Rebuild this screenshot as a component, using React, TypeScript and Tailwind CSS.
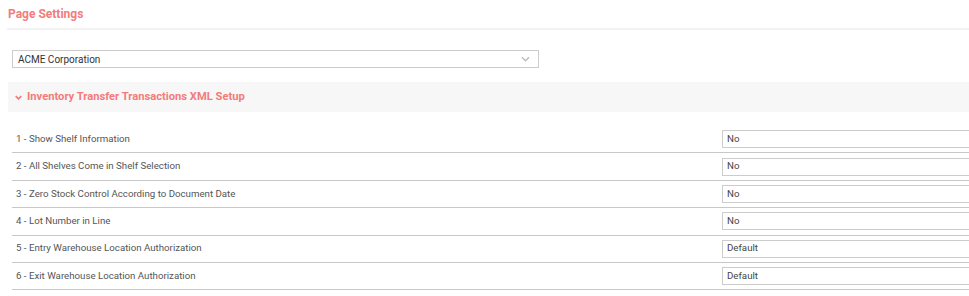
import React from 'react';

const rows = [
  { label: '1 - Show Shelf Information', value: 'No' },
  { label: '2 - All Shelves Come in Shelf Selection', value: 'No' },
  { label: '3 - Zero Stock Control According to Document Date', value: 'No' },
  { label: '4 - Lot Number in Line', value: 'No' },
  { label: '5 - Entry Warehouse Location Authorization', value: 'Default' },
  { label: '6 - Exit Warehouse Location Authorization', value: 'Default' },
];

function Chevron({ className, w = 1.4 }: { className?: string; w?: number }) {
  return (
    <svg viewBox="0 0 10 6" className={className} fill="none" stroke="currentColor" strokeWidth={w}>
      <path d="M1 1l4 4 4-4" />
    </svg>
  );
}

export default function App() {
  return (
    <div className="w-[969px] h-[296px] bg-white overflow-hidden font-['Roboto',sans-serif]">
      {/* Header */}
      <div className="ml-[7px] h-[30px] border-b-2 border-[#f2f2f2] pl-[1px] pt-[6px]">
        <h1 className="text-[12px] font-bold text-[#f27c7c] leading-[16px]">Page Settings</h1>
      </div>

      {/* Company select */}
      <div className="pl-[12px] pt-[20px]">
        <div className="w-[527px] h-[18px] border border-[#ccc] flex items-center justify-between pl-[5px] pr-[8px]">
          <span className="text-[10px] text-[#333]">ACME Corporation</span>
          <Chevron className="w-[9px] h-[6px] text-[#bbb]" />
        </div>
      </div>

      {/* Section header */}
      <div className="ml-[8px] mt-[14px] h-[30px] bg-[#f7f7f7] flex items-center pl-[7px] gap-[5px]">
        <Chevron className="w-[7px] h-[5px] text-[#f27c7c]" w={2.4} />
        <span className="text-[11.2px] font-bold text-[#f27c7c]">Inventory Transfer Transactions XML Setup</span>
      </div>

      {/* Settings rows */}
      <div className="ml-[12px] mt-[14px]">
        {rows.map((r) => (
          <div key={r.label} className="h-[27.4px] border-b border-[#c8c8c8] flex items-center">
            <span className="pl-[4px] text-[9.7px] text-[#555] w-[710px]">{r.label}</span>
            <div className="flex-1 h-[18px] border border-[#ccc] flex items-center pl-[4px] -mr-[4px]">
              <span className="text-[9.7px] text-[#444]">{r.value}</span>
            </div>
          </div>
        ))}
      </div>
    </div>
  );
}
